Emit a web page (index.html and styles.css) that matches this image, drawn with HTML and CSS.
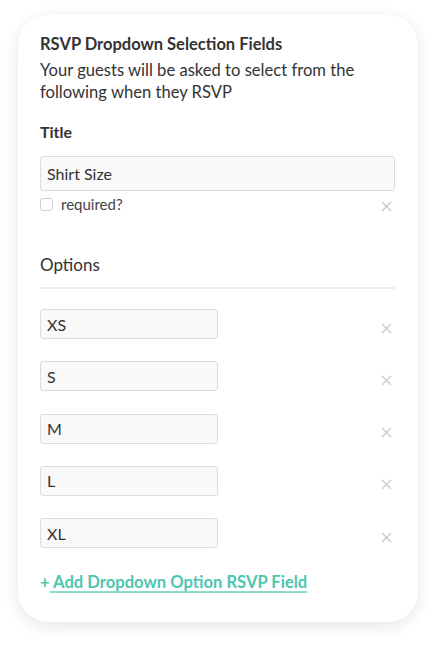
FILE: index.html
```html
<!DOCTYPE html>
<html>
<head>
<meta charset="utf-8">
<link rel="stylesheet" href="styles.css">
</head>
<body>
<div class="card">
  <h1 class="heading">RSVP Dropdown Selection Fields</h1>
  <p class="desc">Your guests will be asked to select from the following when they RSVP</p>
  <h2 class="label">Title</h2>
  <div class="field wide">Shirt Size</div>
  <div class="req-row">
    <label class="req"><span class="box"></span>required?</label>
    <span class="x"><svg viewBox="0 0 11 11" width="11" height="11"><path d="M1 1L10 10M10 1L1 10" stroke="#c8c8c8" stroke-width="1.3" fill="none"/></svg></span>
  </div>
  <h3 class="options">Options</h3>
  <div class="list">
    <div class="opt"><div class="field short">XS</div><span class="x"><svg viewBox="0 0 11 11" width="11" height="11"><path d="M1 1L10 10M10 1L1 10" stroke="#c8c8c8" stroke-width="1.3" fill="none"/></svg></span></div>
    <div class="opt"><div class="field short">S</div><span class="x"><svg viewBox="0 0 11 11" width="11" height="11"><path d="M1 1L10 10M10 1L1 10" stroke="#c8c8c8" stroke-width="1.3" fill="none"/></svg></span></div>
    <div class="opt"><div class="field short">M</div><span class="x"><svg viewBox="0 0 11 11" width="11" height="11"><path d="M1 1L10 10M10 1L1 10" stroke="#c8c8c8" stroke-width="1.3" fill="none"/></svg></span></div>
    <div class="opt"><div class="field short">L</div><span class="x"><svg viewBox="0 0 11 11" width="11" height="11"><path d="M1 1L10 10M10 1L1 10" stroke="#c8c8c8" stroke-width="1.3" fill="none"/></svg></span></div>
    <div class="opt"><div class="field short">XL</div><span class="x"><svg viewBox="0 0 11 11" width="11" height="11"><path d="M1 1L10 10M10 1L1 10" stroke="#c8c8c8" stroke-width="1.3" fill="none"/></svg></span></div>
  </div>
  <a class="add" href="#"><span class="plus">+</span><span class="add-text"> Add Dropdown Option RSVP Field</span></a>
</div>
</body>
</html>
```
FILE: styles.css
```css
html, body {
  margin: 0;
  padding: 0;
  background: #ffffff;
}
body {
  padding: 15px 22px 25px 18px;
  font-family: Lato, "Noto Sans", sans-serif;
  color: #333333;
}
.card {
  background: #fff;
  border-radius: 30px;
  box-shadow: 0 4px 16px rgba(0,0,0,0.10);
  padding: 19px 22px 30px 22px;
  height: 607px;
  box-sizing: border-box;
}
.heading {
  margin: 0;
  font-size: 16.5px;
  font-weight: 700;
  line-height: 20px;
  color: #333;
}
.desc {
  margin: 5px 0 0 0;
  font-size: 16.6px;
  line-height: 22px;
  color: #333;
}
.label {
  margin: 19px 0 0 0;
  font-size: 16px;
  font-weight: 700;
  line-height: 20px;
}
.field {
  box-sizing: border-box;
  background: #f9f9f9;
  border: 1px solid #dcdcdc;
  border-radius: 3px;
  font-size: 16px;
  color: #333;
  padding: 0 6px;
  display: flex;
  align-items: center;
}
.wide {
  margin-top: 14px;
  width: 355px;
  height: 35px;
}
.req-row {
  display: flex;
  justify-content: space-between;
  align-items: center;
  width: 355px;
  margin-top: 4px;
  height: 18px;
}
.req {
  display: flex;
  align-items: center;
  font-size: 15px;
  color: #444;
}
.box {
  width: 11px;
  height: 11px;
  border: 1px solid #cfcfcf;
  border-radius: 3px;
  margin-right: 8px;
}
.x {
  display: flex;
  width: 11px;
  height: 11px;
  margin-right: 3px;
  margin-top: 4px;
}
.options {
  margin: 42px 0 0 0;
  font-size: 17px;
  font-weight: 400;
  line-height: 20px;
  padding-bottom: 12px;
  border-bottom: 2px solid #ececec;
  width: 355px;
}
.list {
  display: flex;
  flex-direction: column;
  gap: 22.3px;
  margin-top: 20px;
  width: 355px;
}
.opt {
  display: flex;
  justify-content: space-between;
  align-items: center;
}
.short {
  width: 178px;
  height: 30px;
}
.opt .x {
  margin-top: 8px;
}
.add {
  display: inline-block;
  margin-top: 24px;
  font-size: 16.6px;
  font-weight: 700;
  color: #4dc6b0;
  text-decoration: none;
}
.add-text {
  text-decoration: underline;
  text-decoration-color: #8fdccd;
  text-decoration-thickness: 2px;
  text-underline-offset: 3px;
}
```
